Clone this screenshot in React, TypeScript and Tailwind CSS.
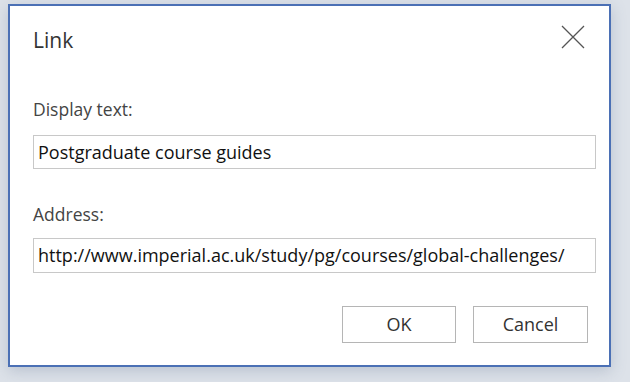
export default function App() {
  return (
    <div className="w-[630px] h-[382px] bg-[#dde2e9] relative overflow-hidden" style={{ fontFamily: '"Open Sans", "Noto Sans", sans-serif' }}>
      <div className="absolute left-[8px] top-[4px] w-[603px] h-[363px] bg-white border-2 border-[#4b70b5] shadow-[0_4px_14px_rgba(80,100,130,0.25)] flex flex-col">
        <div className="flex items-start justify-between pl-[23px] pr-[24px] pt-[19px]">
          <div className="text-[21px] leading-[30px] text-[#333]">Link</div>
          <svg width="24" height="24" viewBox="0 0 24 24" className="mt-[0px]">
            <path d="M1 1 L23 23 M23 1 L1 23" stroke="#555" strokeWidth="1.3" fill="none" />
          </svg>
        </div>
        <div className="pl-[23px] pr-[12px] flex flex-col">
          <div className="mt-[43px] text-[17.5px] leading-[22px] text-[#444]">Display text:</div>
          <div className="mt-[15px] h-[34px] border border-[#c8c8c8] flex items-center px-[4px] text-[18px] text-[#111] mr-[1px]">Postgraduate course guides</div>
          <div className="mt-[34px] text-[17.5px] leading-[22px] text-[#444]">Address:</div>
          <div className="mt-[13px] h-[35px] border border-[#c8c8c8] flex items-center px-[4px] text-[18px] text-[#111] mr-[1px] whitespace-nowrap overflow-hidden">http://www.imperial.ac.uk/study/pg/courses/global-challenges/</div>
        </div>
        <div className="flex justify-end gap-[17px] pr-[21px] mt-[33px]">
          <div className="w-[114px] h-[37px] border border-[#b5b5b5] flex items-center justify-center text-[18px] text-[#333]">OK</div>
          <div className="w-[115px] h-[37px] border border-[#b5b5b5] flex items-center justify-center text-[18px] text-[#333]">Cancel</div>
        </div>
      </div>
    </div>
  );
}
